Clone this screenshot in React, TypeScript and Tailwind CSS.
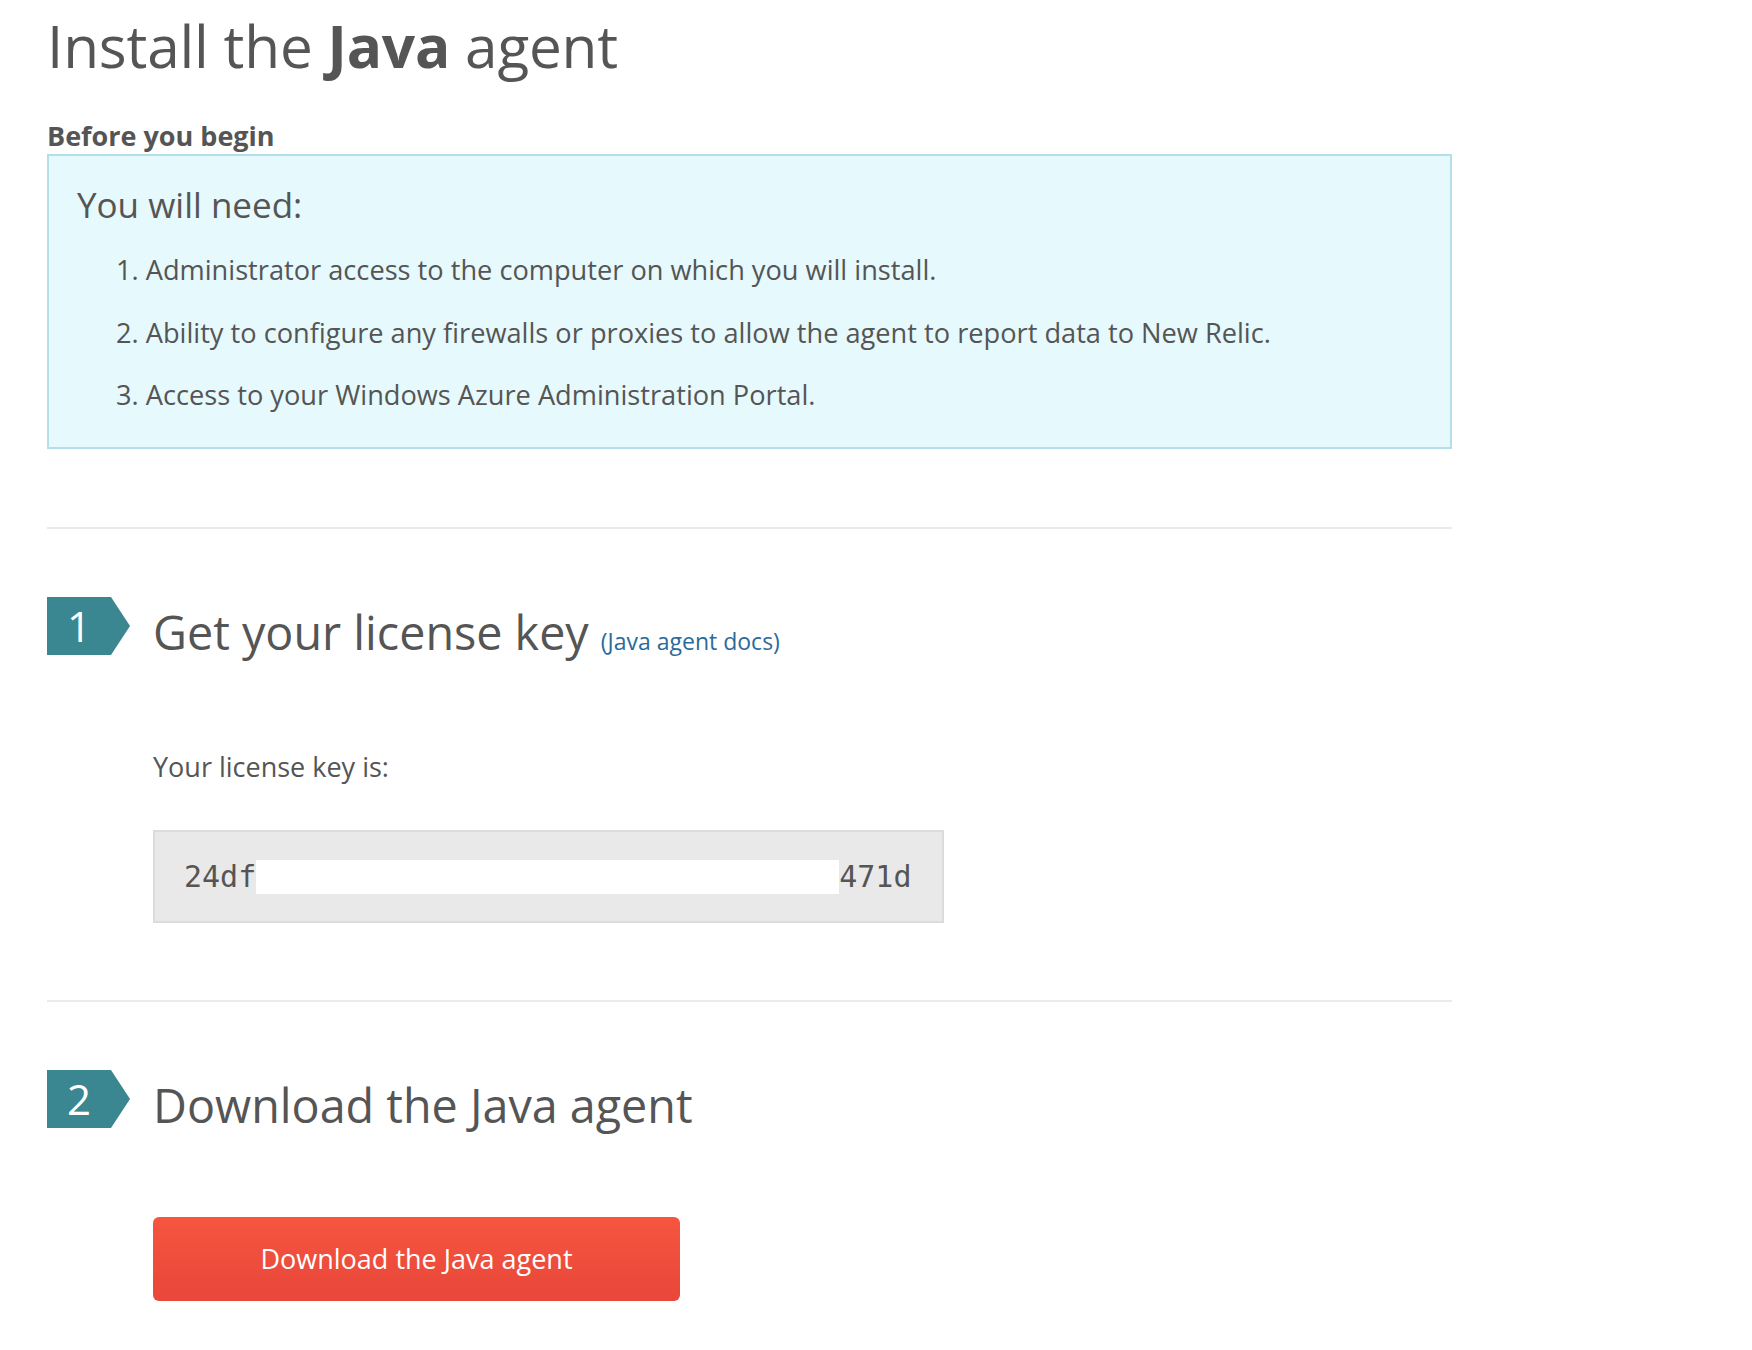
import React from "react";

function StepBadge({ n }: { n: string }) {
  return (
    <div className="relative h-[58px] w-[83px] shrink-0 bg-[#3a8792] [clip-path:polygon(0_0,64px_0,83px_50%,64px_100%,0_100%)]">
      <div className="flex h-[58px] w-[64px] items-center justify-center text-[42px] leading-none text-white">
        {n}
      </div>
    </div>
  );
}

export default function App() {
  return (
    <div className="min-h-[1350px] bg-white font-['Open_Sans',sans-serif] text-[#555555]">
      <div className="ml-[47px] w-[1405px] pt-[12px]">
        <h1 className="text-[58.5px] font-normal leading-[66px] tracking-[-0.2px]">
          Install the <span className="font-bold">Java</span> agent
        </h1>

        <div className="mt-[40px] text-[27px] font-bold leading-[36px]">Before you begin</div>

        <div className="h-[295px] border-2 border-[#b3dfe8] bg-[#e6f9fd] pl-[28px] pt-[27px]">
          <div className="text-[35px] leading-[44px]">You will need:</div>
          <ol className="mt-[25px] flex flex-col gap-[26.5px] pl-[39px] text-[27.2px] leading-[36px]">
            <li>1. Administrator access to the computer on which you will install.</li>
            <li>2. Ability to configure any firewalls or proxies to allow the agent to report data to New Relic.</li>
            <li>3. Access to your Windows Azure Administration Portal.</li>
          </ol>
        </div>

        <div className="mt-[78px] h-[2px] bg-[#ebebeb]" />

        <div className="mt-[68px] flex items-start gap-[23px]">
          <StepBadge n="1" />
          <h2 className="mt-[6px] text-[46.7px] font-normal leading-[58px]">
            Get your license key
            <a className="ml-[12px] text-[23px] text-[#2a6b9c]" href="#">
              (Java agent docs)
            </a>
          </h2>
        </div>

        <div className="pl-[106px]">
          <div className="mt-[79px] text-[27px] leading-[36px]">Your license key is:</div>
          <div className="mt-[45px] flex h-[93px] w-[791px] items-center border-2 border-[#dcdcdc] bg-[#e9e9e9] pl-[29px] font-['DejaVu_Sans_Mono',monospace] text-[30px] text-[#555555]">
            <span>24df</span>
            <span className="inline-block h-[34px] w-[583px] bg-white" />
            <span>471d</span>
          </div>
        </div>

        <div className="mt-[77px] h-[2px] bg-[#ebebeb]" />

        <div className="mt-[68px] flex items-start gap-[23px]">
          <StepBadge n="2" />
          <h2 className="mt-[6px] text-[46.7px] font-normal leading-[58px]">Download the Java agent</h2>
        </div>

        <div className="pl-[106px]">
          <button className="mt-[83px] flex h-[84px] w-[527px] items-center justify-center rounded-[6px] bg-gradient-to-b from-[#f6553f] to-[#e8473a] text-[27px] text-white">
            Download the Java agent
          </button>
        </div>
      </div>
    </div>
  );
}
